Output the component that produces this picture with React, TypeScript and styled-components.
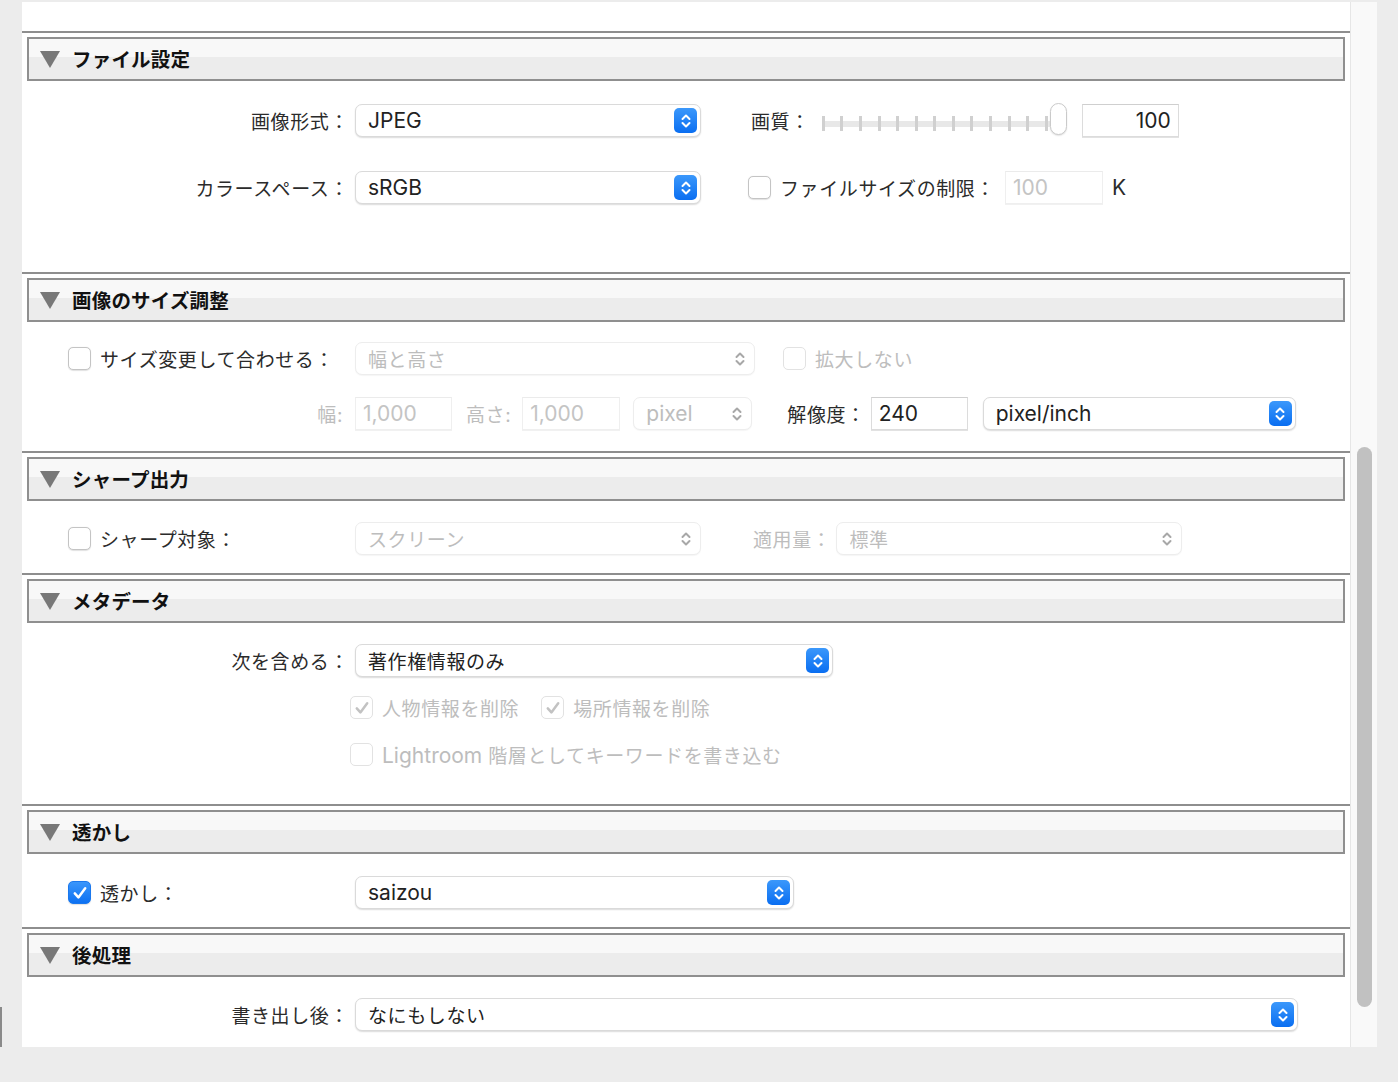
import React from "react";
import styled, { createGlobalStyle } from "styled-components";

const GlobalStyle = createGlobalStyle`
  html, body {
    margin: 0;
    padding: 0;
    background: #ececec;
  }
`;

const Page = styled.div`
  display: flex;
  align-items: flex-start;
  padding-top: 2px;
  height: 1082px;
  box-sizing: border-box;
  background: #ececec;
  font-family: Inter, "Noto Sans CJK JP", sans-serif;
  font-size: 19px;
  letter-spacing: 0.6px;
  color: #2b2b2b;
`;

const Gutter = styled.div`
  width: 22px;
  height: 1045px;
  display: flex;
  flex-direction: column;
  justify-content: flex-end;
  flex-shrink: 0;
`;

const Stub = styled.div`
  width: 2px;
  height: 40px;
  background: #8a8a8a;
`;

const Panel = styled.div`
  width: 1328px;
  height: 1045px;
  flex-shrink: 0;
  background: #ffffff;
  overflow: hidden;
  padding-top: 29px;
  box-sizing: border-box;
`;

const ScrollTrack = styled.div`
  width: 27px;
  height: 1045px;
  flex-shrink: 0;
  box-sizing: border-box;
  background: #f9f9f9;
  border-left: 1px solid #e6e6e6;
  padding-top: 445px;
  display: flex;
  justify-content: center;
`;

const Thumb = styled.div`
  width: 15px;
  height: 560px;
  border-radius: 8px;
  background: #c1c1c1;
`;

const Separator = styled.div`
  height: 2px;
  background: #8e8e8e;
`;

const HeaderWrap = styled.div`
  padding: 4px 5px 0;
`;

const Header = styled.div`
  height: 44px;
  box-sizing: border-box;
  border: 2px solid #8f8f8f;
  background: linear-gradient(#f8f8f8 0, #f8f8f8 45%, #ececec 45%, #ececec 100%);
  display: flex;
  align-items: center;
  padding-left: 11px;
  gap: 12px;
`;

const Title = styled.span`
  font-weight: 700;
  font-size: 19.5px;
  letter-spacing: 0.2px;
  color: #111;
  margin-top: -2px;
`;

const Body = styled.div<{ $h: number; $pt?: number; $gap?: number }>`
  height: ${(p) => p.$h}px;
  box-sizing: border-box;
  padding-top: ${(p) => p.$pt ?? 21}px;
  display: flex;
  flex-direction: column;
  gap: ${(p) => p.$gap ?? 34}px;
`;

const Row = styled.div`
  display: flex;
  align-items: center;
  height: 33px;
  flex-shrink: 0;
`;

const LabelCell = styled.div<{ $disabled?: boolean; $pr?: number }>`
  width: 333px;
  flex-shrink: 0;
  box-sizing: border-box;
  padding-right: ${(p) => p.$pr ?? 6}px;
  margin-top: -1px;
  text-align: right;
  white-space: nowrap;
  color: ${(p) => (p.$disabled ? "#bdbdbd" : "#2b2b2b")};
`;

const CheckCell = styled.div`
  width: 333px;
  flex-shrink: 0;
  box-sizing: border-box;
  padding-left: 46px;
  display: flex;
  align-items: center;
  gap: 9px;
  white-space: nowrap;
`;

const Text = styled.span<{ $ml?: number; $disabled?: boolean }>`
  margin-left: ${(p) => p.$ml ?? 0}px;
  margin-top: -1px;
  white-space: nowrap;
  color: ${(p) => (p.$disabled ? "#bdbdbd" : "#2b2b2b")};
`;

const Latin = styled.span`
  font-size: 21px;
  letter-spacing: 0;
`;

const Box = styled.span<{ $checked?: boolean; $disabled?: boolean; $ml?: number }>`
  width: 23px;
  height: 23px;
  flex-shrink: 0;
  box-sizing: border-box;
  margin-left: ${(p) => p.$ml ?? 0}px;
  border-radius: 5px;
  display: inline-flex;
  align-items: center;
  justify-content: center;
  background: ${(p) =>
    p.$checked && !p.$disabled
      ? "linear-gradient(#3a96fb, #0d71f2)"
      : "#ffffff"};
  border: 1px solid
    ${(p) =>
      p.$checked && !p.$disabled ? "#1a78ee" : p.$disabled ? "#e2e2e2" : "#c4c4c4"};
  box-shadow: ${(p) => (p.$disabled ? "none" : "0 0.5px 1px rgba(0,0,0,0.12)")};
`;

const Checkbox = ({
  checked,
  disabled,
  ml,
}: {
  checked?: boolean;
  disabled?: boolean;
  ml?: number;
}) => (
  <Box $checked={checked} $disabled={disabled} $ml={ml}>
    {checked && (
      <svg width="18" height="18" viewBox="0 0 18 18">
        <path
          d="M3.8 9.4 L7.4 13.4 L14.2 4.2"
          fill="none"
          stroke={disabled ? "#c2c2c2" : "#ffffff"}
          strokeWidth="2.5"
          strokeLinecap="round"
          strokeLinejoin="round"
        />
      </svg>
    )}
  </Box>
);

const SelectBox = styled.div<{ $w: number; $ml?: number; $disabled?: boolean }>`
  width: ${(p) => p.$w}px;
  height: 33px;
  flex-shrink: 0;
  box-sizing: border-box;
  margin-left: ${(p) => p.$ml ?? 0}px;
  border-radius: 7px;
  background: #ffffff;
  border: 1px solid ${(p) => (p.$disabled ? "#ededed" : "#dadada")};
  box-shadow: ${(p) =>
    p.$disabled ? "0 1px 1px rgba(0,0,0,0.04)" : "0 1px 1.5px rgba(0,0,0,0.14)"};
  padding: 0 3px 0 12px;
  display: flex;
  align-items: center;
  justify-content: space-between;
  color: ${(p) => (p.$disabled ? "#bdbdbd" : "#222222")};
  white-space: nowrap;
`;

const StepButton = styled.span<{ $disabled?: boolean }>`
  width: 23px;
  height: 25px;
  border-radius: 5px;
  display: inline-flex;
  align-items: center;
  justify-content: center;
  background: ${(p) => (p.$disabled ? "transparent" : "linear-gradient(#3b98fb, #0a6ef1)")};
`;

const Chevrons = ({ color }: { color: string }) => (
  <svg width="12" height="18" viewBox="0 0 12 18">
    <path
      d="M2.5 7 L6 3.5 L9.5 7 M2.5 11 L6 14.5 L9.5 11"
      fill="none"
      stroke={color}
      strokeWidth="2"
      strokeLinecap="round"
      strokeLinejoin="round"
    />
  </svg>
);

const Select = ({
  w,
  value,
  ml,
  disabled,
}: {
  w: number;
  value: React.ReactNode;
  ml?: number;
  disabled?: boolean;
}) => (
  <SelectBox $w={w} $ml={ml} $disabled={disabled}>
    <span>{value}</span>
    <StepButton $disabled={disabled}>
      <Chevrons color={disabled ? "#a8a8a8" : "#ffffff"} />
    </StepButton>
  </SelectBox>
);

const Field = styled.div<{ $w: number; $ml?: number; $right?: boolean; $disabled?: boolean }>`
  width: ${(p) => p.$w}px;
  height: 33px;
  flex-shrink: 0;
  box-sizing: border-box;
  margin-left: ${(p) => p.$ml ?? 0}px;
  padding: 0 7px;
  display: flex;
  align-items: center;
  justify-content: ${(p) => (p.$right ? "flex-end" : "flex-start")};
  background: #ffffff;
  border: 1px solid ${(p) => (p.$disabled ? "#efefef" : "#dcdcdc")};
  border-top-color: ${(p) => (p.$disabled ? "#ebebeb" : "#cfcfcf")};
  box-shadow: 0 1px 0 ${(p) => (p.$disabled ? "#f1f1f1" : "#e2e2e2")};
  color: ${(p) => (p.$disabled ? "#c4c4c4" : "#222222")};
  font-size: 21px;
  letter-spacing: 0;
`;

const Slider = styled.div<{ $ml?: number }>`
  position: relative;
  margin-left: ${(p) => p.$ml ?? 0}px;
  margin-top: 6px;
  width: 247px;
  height: 32px;
  display: flex;
  align-items: center;
  background: linear-gradient(#e8e8e8, #e8e8e8) no-repeat 2px center / 228px 6px;
`;

const Ticks = styled.div`
  width: 226px;
  margin-left: 2px;
  display: flex;
  justify-content: space-between;
`;

const Tick = styled.span`
  width: 3px;
  height: 15px;
  background: #d0d0d0;
`;

const Knob = styled.span`
  position: absolute;
  right: 0;
  top: -5px;
  width: 17px;
  height: 32px;
  box-sizing: border-box;
  border-radius: 9px;
  background: #ffffff;
  border: 1px solid #cacaca;
  box-shadow: 0 1px 1.5px rgba(0, 0, 0, 0.12);
`;

const Triangle = () => (
  <svg width="20" height="17" viewBox="0 0 20 17">
    <polygon points="0,0 20,0 10,17" fill="#787878" />
  </svg>
);

const Section = ({
  title,
  h,
  pt,
  gap,
  children,
}: {
  title: string;
  h: number;
  pt?: number;
  gap?: number;
  children: React.ReactNode;
}) => (
  <>
    <Separator />
    <HeaderWrap>
      <Header>
        <Triangle />
        <Title>{title}</Title>
      </Header>
    </HeaderWrap>
    <Body $h={h} $pt={pt} $gap={gap}>
      {children}
    </Body>
  </>
);

export default function App() {
  return (
    <Page>
      <GlobalStyle />
      <Gutter>
        <Stub />
      </Gutter>
      <Panel>
        <Section title="ファイル設定" h={191} pt={23} gap={34}>
          <Row>
            <LabelCell>画像形式：</LabelCell>
            <Select w={346} value={<Latin>JPEG</Latin>} />
            <Text $ml={50}>画質：</Text>
            <Slider $ml={10}>
              <Ticks>
                {Array.from({ length: 13 }).map((_, i) => (
                  <Tick key={i} />
                ))}
              </Ticks>
              <Knob />
            </Slider>
            <Field $w={97} $ml={15} $right>
              100
            </Field>
          </Row>
          <Row>
            <LabelCell>カラースペース：</LabelCell>
            <Select w={346} value={<Latin>sRGB</Latin>} />
            <Checkbox ml={47} />
            <Text $ml={9}>ファイルサイズの制限：</Text>
            <Field $w={98} $ml={10} $disabled>
              100
            </Field>
            <Text $ml={9}>
              <Latin>K</Latin>
            </Text>
          </Row>
        </Section>

        <Section title="画像のサイズ調整" h={129} pt={20} gap={22}>
          <Row>
            <CheckCell>
              <Checkbox />
              <Text>サイズ変更して合わせる：</Text>
            </CheckCell>
            <Select w={400} value="幅と高さ" disabled />
            <Checkbox ml={28} disabled />
            <Text $ml={9} $disabled>
              拡大しない
            </Text>
          </Row>
          <Row>
            <LabelCell $disabled $pr={12}>
              幅:
            </LabelCell>
            <Field $w={97} $disabled>
              1,000
            </Field>
            <Text $ml={14} $disabled>
              高さ:
            </Text>
            <Field $w={98} $ml={11} $disabled>
              1,000
            </Field>
            <Select w={119} ml={13} value={<Latin>pixel</Latin>} disabled />
            <Text $ml={35}>解像度：</Text>
            <Field $w={97} $ml={5}>
              240
            </Field>
            <Select w={313} ml={15} value={<Latin>pixel/inch</Latin>} />
          </Row>
        </Section>

        <Section title="シャープ出力" h={72} pt={21}>
          <Row>
            <CheckCell>
              <Checkbox />
              <Text>シャープ対象：</Text>
            </CheckCell>
            <Select w={346} value="スクリーン" disabled />
            <Text $ml={52} $disabled>
              適用量：
            </Text>
            <Select w={346} ml={5} value="標準" disabled />
          </Row>
        </Section>

        <Section title="メタデータ" h={181} pt={21} gap={14}>
          <Row>
            <LabelCell>次を含める：</LabelCell>
            <Select w={478} value="著作権情報のみ" />
          </Row>
          <Row>
            <Checkbox ml={328} checked disabled />
            <Text $ml={9} $disabled>
              人物情報を削除
            </Text>
            <Checkbox ml={22} checked disabled />
            <Text $ml={9} $disabled>
              場所情報を削除
            </Text>
          </Row>
          <Row>
            <Checkbox ml={328} disabled />
            <Text $ml={9} $disabled>
              <Latin>Lightroom</Latin> 階層としてキーワードを書き込む
            </Text>
          </Row>
        </Section>

        <Section title="透かし" h={73} pt={22}>
          <Row>
            <CheckCell>
              <Checkbox checked />
              <Text>透かし：</Text>
            </CheckCell>
            <Select w={439} value={<Latin>saizou</Latin>} />
          </Row>
        </Section>

        <Section title="後処理" h={70} pt={21}>
          <Row>
            <LabelCell>書き出し後：</LabelCell>
            <Select w={943} value="なにもしない" />
          </Row>
        </Section>
      </Panel>
      <ScrollTrack>
        <Thumb />
      </ScrollTrack>
    </Page>
  );
}
